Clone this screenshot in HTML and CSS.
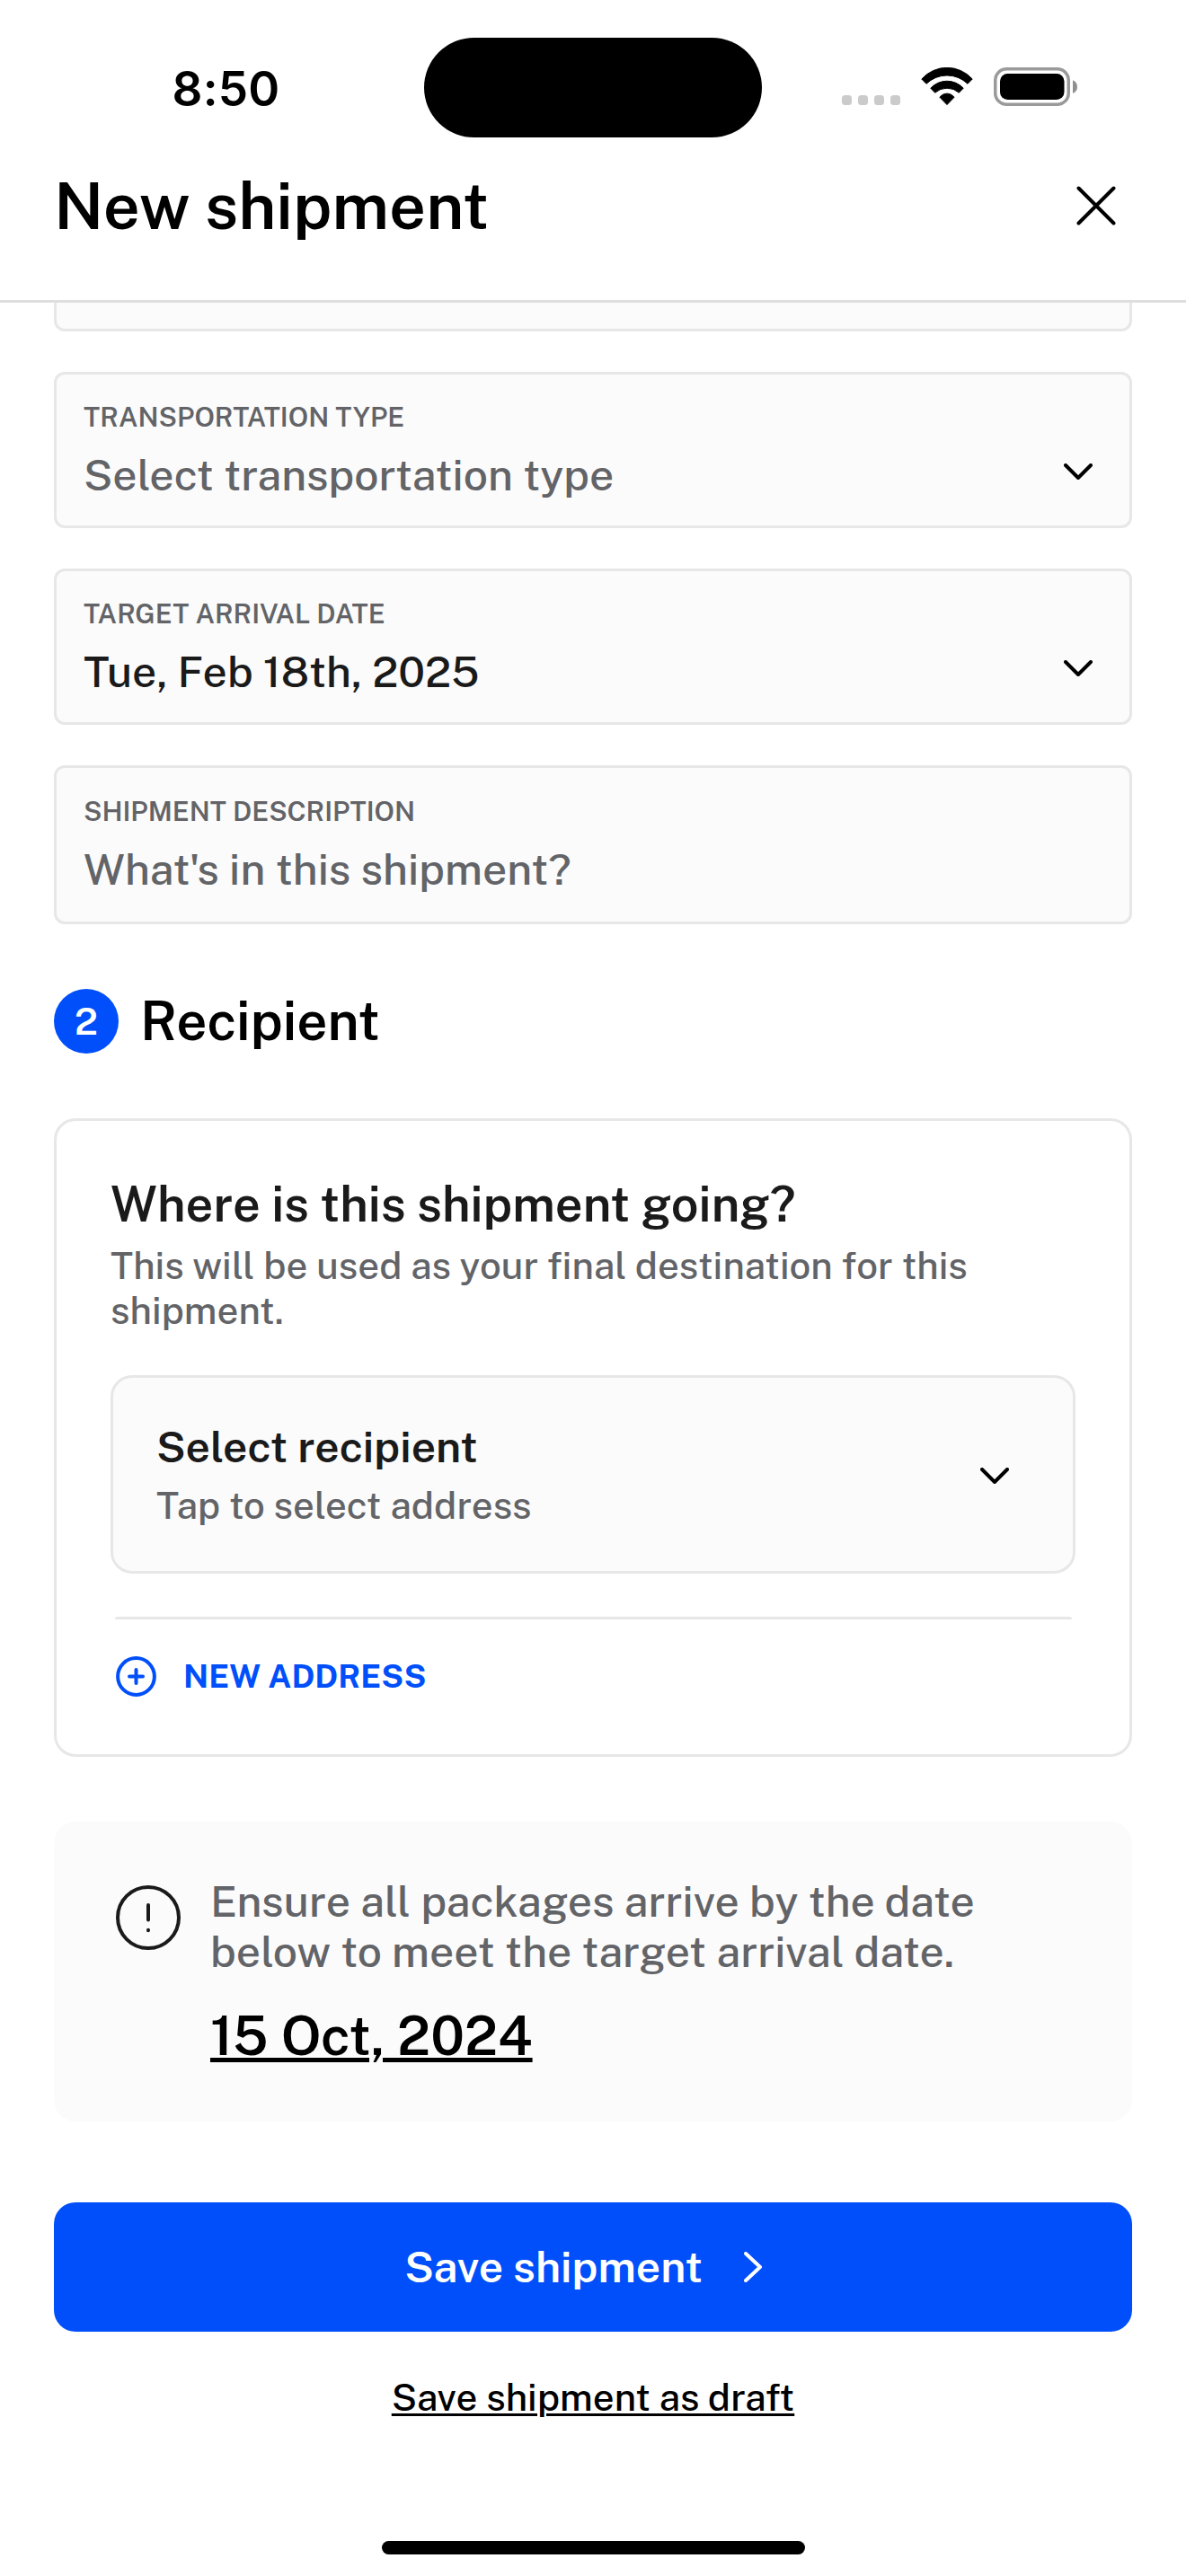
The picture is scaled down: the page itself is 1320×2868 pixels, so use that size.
FILE: index.html
```html
<!DOCTYPE html>
<html lang="en">
<head>
<meta charset="utf-8">
<title>New shipment</title>
<link rel="stylesheet" href="styles.css">
</head>
<body>
<div class="screen">
  <div class="status-bar">
    <div class="status-time">8:50</div>
    <div class="island"></div>
    <div class="status-icons">
      <svg class="status-dots" width="54" height="44" viewBox="0 0 54 44" fill="#cbcbcb">
        <rect x="0" y="31" width="11" height="11" rx="3.5"/><rect x="18" y="31" width="11" height="11" rx="3.5"/><rect x="36" y="31" width="11" height="11" rx="3.5"/><rect x="54" y="31" width="11" height="11" rx="3.5"/>
      </svg>
      <svg class="status-wifi" width="58" height="44" viewBox="0 0 58 44" stroke="#000" stroke-width="1" stroke-linejoin="round">
        <path d="M.8 13A37.7 37.7 0 0 1 57.2 13L52 18.3A33 33 0 0 0 6 18.3Z"/>
        <path d="M10.8 23.2A24.8 24.8 0 0 1 47.2 23.2L42.3 28.2A20.1 20.1 0 0 0 15.7 28.2Z"/>
        <path d="M21 33.3A9.8 9.8 0 0 1 37 33.3L29 41.6Z"/>
      </svg>
      <svg class="status-battery" width="94" height="44" viewBox="0 0 94 44">
        <rect x="1.75" y="1.75" width="81.5" height="39.5" rx="12.5" fill="none" stroke="#9a9a9a" stroke-width="3.5"/>
        <rect x="7" y="7" width="71.5" height="29" rx="8.5"/>
        <path d="M88 14.3Q93 16.4 93 21.8T88 29Z" fill="#8f8f8f"/>
      </svg>
    </div>
  </div>

  <header class="header">
    <h1 class="title">New shipment</h1>
    <svg class="close" width="44" height="44" viewBox="0 0 44 44" fill="none" stroke="#000" stroke-width="4" stroke-linecap="round"><path d="M2.5 2.5L41.5 41.5M41.5 2.5L2.5 41.5"/></svg>
  </header>

  <main class="content">
    <div class="field field-scrolled"></div>
    <div class="field">
      <div class="field-text">
        <div class="label">TRANSPORTATION TYPE</div>
        <div class="value placeholder">Select transportation type</div>
      </div>
      <svg class="chevron" width="32" height="18" viewBox="0 0 32 18"><path d="M2 2L16 16L30 2"/></svg>
    </div>
    <div class="field">
      <div class="field-text">
        <div class="label">TARGET ARRIVAL DATE</div>
        <div class="value">Tue, Feb 18th, 2025</div>
      </div>
      <svg class="chevron" width="32" height="18" viewBox="0 0 32 18"><path d="M2 2L16 16L30 2"/></svg>
    </div>
    <div class="field field-input">
      <div class="field-text">
        <div class="label">SHIPMENT DESCRIPTION</div>
        <div class="value placeholder">What's in this shipment?</div>
      </div>
    </div>

    <div class="section-head">
      <span class="step">2</span>
      <h2 class="section-title">Recipient</h2>
    </div>

    <section class="card">
      <h3 class="card-title">Where is this shipment going?</h3>
      <p class="card-sub">This will be used as your final destination for this shipment.</p>
      <div class="select">
        <div>
          <div class="select-title">Select recipient</div>
          <div class="select-sub">Tap to select address</div>
        </div>
        <svg class="select-chevron" width="32" height="18" viewBox="0 0 32 18"><path d="M2 2L16 16L30 2"/></svg>
      </div>
      <div class="divider"></div>
      <div class="new-address">
        <svg width="45" height="45" viewBox="0 0 45 45" fill="none" stroke="#004ffb" stroke-width="4" stroke-linecap="round"><circle cx="22.5" cy="22.5" r="20.4"/><path d="M22.5 15V30M15 22.5H30"/></svg>
        <span>NEW ADDRESS</span>
      </div>
    </section>

    <section class="notice">
      <svg class="notice-icon" width="72" height="72" viewBox="0 0 72 72" fill="none" stroke="#1a1a1a" stroke-width="4" stroke-linecap="round"><circle cx="36" cy="36" r="34"/><path d="M36 22V38.5M36 49.8V50.2"/></svg>
      <div>
        <p class="notice-text">Ensure all packages arrive by the date<br>below to meet the target arrival date.</p>
        <div class="notice-date">15 Oct, 2024</div>
      </div>
    </section>

    <div class="save">
      <span class="save-label">Save shipment</span>
      <svg class="save-arrow" width="22" height="34" viewBox="0 0 22 34" fill="none" stroke="#fff" stroke-width="4" stroke-linecap="round" stroke-linejoin="round"><path d="M3 2L19 17L3 32"/></svg>
    </div>
    <div class="draft">Save shipment as draft</div>
  </main>
  <div class="home-bar"></div>
</div>
</body>
</html>
```
FILE: styles.css
```css
* { box-sizing: border-box; }
body { margin: 0; background: #fff; }
h1, h2, h3, p { margin: 0; }
svg { display: block; flex: none; }

.screen {
  width: 1320px;
  height: 2868px;
  overflow: hidden;
  font-family: "Public Sans", Inter, "Liberation Sans", sans-serif;
  font-weight: 500;
  color: #1a1a1a;
}

.status-bar {
  display: grid;
  grid-template-columns: 472px 376px 472px;
  align-items: center;
  height: 153px;
  padding-top: 41px;
}
.status-time {
  padding: 3px 0 0 31px;
  text-align: center;
  font: 600 53px/60px Inter, "Liberation Sans", sans-serif;
  letter-spacing: 0.2px;
  color: #000;
}
.island { height: 111px; border-radius: 56px; background: #000; }
.status-icons { display: flex; padding-left: 89px; }
.status-dots { overflow: visible; }
.status-wifi { margin-left: 34px; }
.status-battery { margin-left: 23px; }

.header {
  display: flex;
  justify-content: space-between;
  align-items: flex-start;
  height: 184px;
  padding: 34px 78px 0 60px;
  border-bottom: 3px solid #dedede;
}
.title { font-size: 72px; line-height: 84px; font-weight: 600; color: #000; }
.close { margin-top: 20px; }

.content { padding: 0 60px; }
.field {
  display: flex;
  justify-content: space-between;
  height: 174px;
  margin-bottom: 45px;
  padding: 29px 41px 0 30px;
  border: 3px solid #e7e7e7;
  border-radius: 12px;
  background: #fbfbfb;
}
.field-scrolled { height: 32px; border-top: 0; border-radius: 0 0 12px 12px; }
.field-input { height: 177px; padding-top: 30px; margin-bottom: 0; }
.label { font-size: 30px; line-height: 36px; font-weight: 600; color: #636468; }
.value { margin-top: 19px; font-size: 48px; line-height: 56px; }
.placeholder { color: #636468; }
.chevron { align-self: flex-end; margin-bottom: 51px; }
.chevron, .select-chevron {
  fill: none;
  stroke: #000;
  stroke-width: 4;
  stroke-linecap: round;
  stroke-linejoin: round;
}

.section-head { display: flex; align-items: center; gap: 24px; height: 72px; margin-top: 72px; }
.step {
  width: 72px;
  height: 72px;
  border-radius: 50%;
  background: #004ffb;
  color: #fff;
  font-size: 42px;
  line-height: 72px;
  font-weight: 600;
  text-align: center;
}
.section-title { font-size: 60px; line-height: 72px; font-weight: 600; color: #000; }

.card {
  height: 711px;
  margin-top: 72px;
  padding: 61px 60px 60px;
  border: 3px solid #e7e7e7;
  border-radius: 24px;
}
.card-title { font-size: 54px; line-height: 64px; font-weight: 600; }
.card-sub { margin-top: 11px; font-size: 42px; line-height: 50px; color: #636468; }
.select {
  display: flex;
  justify-content: space-between;
  align-items: center;
  height: 221px;
  margin-top: 47px;
  padding: 0 71px 0 48px;
  border: 3px solid #e7e7e7;
  border-radius: 24px;
  background: #fbfbfb;
}
.select-title { font-size: 48px; line-height: 56px; font-weight: 600; }
.select-sub { margin-top: 12px; font-size: 42px; line-height: 50px; color: #636468; }
.select-chevron { margin-top: 3px; }
.divider { height: 3px; margin: 48px 4px 0 5px; border-radius: 6px 6px 0 0; background: #e7e7e7; }
.new-address {
  display: flex;
  align-items: center;
  gap: 30px;
  margin-top: 41px;
  padding-left: 6px;
  font-size: 36px;
  line-height: 45px;
  font-weight: 700;
  color: #004ffb;
}

.notice {
  display: flex;
  gap: 33px;
  height: 334px;
  margin-top: 72px;
  padding: 61px 60px 0 69px;
  border-radius: 24px;
  background: #fbfbfb;
}
.notice-icon { margin-top: 10px; }
.notice-text { font-size: 48px; line-height: 56px; color: #636468; }
.notice-date {
  margin-top: 31px;
  font-size: 60px;
  line-height: 70px;
  font-weight: 600;
  color: #000;
  text-decoration: underline;
  text-decoration-thickness: 5px;
  text-underline-offset: 3px;
}

.save {
  display: flex;
  align-items: center;
  justify-content: center;
  height: 144px;
  margin-top: 90px;
  border-radius: 24px;
  background: #004ffb;
  color: #fff;
  font-size: 48px;
  font-weight: 600;
}
.save-label { padding-bottom: 1px; }
.save-arrow { margin: 0 21px 0 45px; }
.draft {
  margin-top: 48px;
  font-size: 42px;
  line-height: 50px;
  text-align: center;
  color: #000;
  text-decoration: underline;
  text-decoration-thickness: 3px;
  text-underline-offset: 3px;
}
.home-bar { width: 471px; height: 15px; margin: 135px auto 0; border-radius: 8px; background: #000; }
```
